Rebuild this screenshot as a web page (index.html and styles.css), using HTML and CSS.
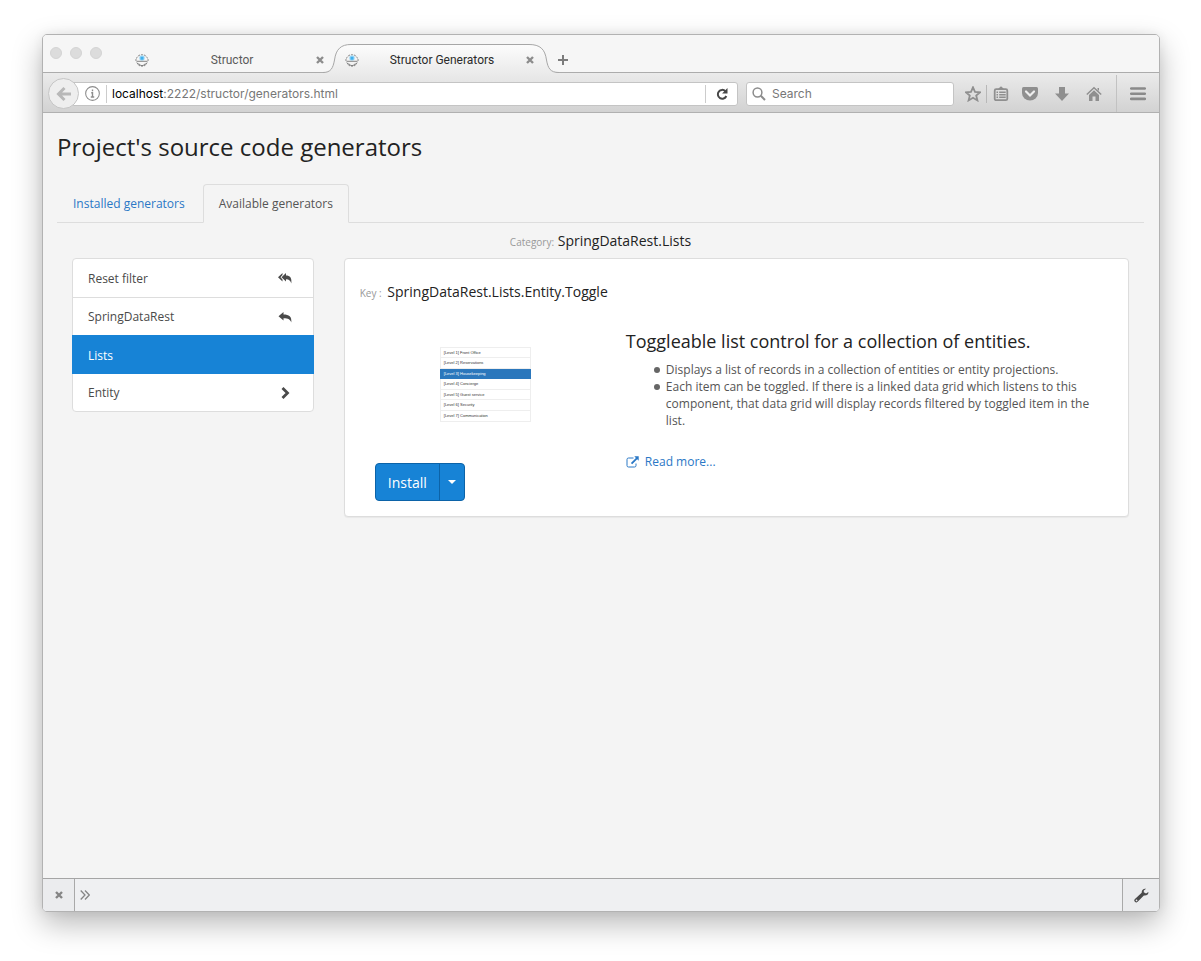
FILE: index.html
```html
<!DOCTYPE html>
<html lang="en">
<head>
<meta charset="utf-8">
<meta name="viewport" content="width=device-width, initial-scale=1">
<title>Structor Generators</title>
<link rel="stylesheet" href="styles.css">
</head>
<body>
<svg class="symbols" aria-hidden="true">
  <symbol id="favicon" viewBox="0 0 14 14">
    <circle cx="7" cy="5" r="2.800" fill="#a9dcf7"/>
    <rect x="5.500" y="3.700" width="3" height="3" fill="#3fb0ee"/>
    <g fill="none" stroke="#777" stroke-width=".9">
      <path d="M1.500 5.500A5.700 5.200 0 0 1 12.500 5.500" stroke-dasharray="2 1"/>
      <path d="M0 7h1.800M12.200 7H14M1.500 8.300h11M1.800 9.500Q3 12 5 13M12.200 9.500Q11 12 9 13"/>
      <path d="M3.500 10.500l3.500 3 3.500-3M6 12.500h2"/>
    </g>
  </symbol>
  <symbol id="close" viewBox="0 0 10 10"><path d="M2 2l6 6M8 2l-6 6" stroke="currentColor" stroke-width="2.400" fill="none"/></symbol>
</svg>

<div class="window">
  <header class="tabstrip">
    <div class="lights"><span></span><span></span><span></span></div>
    <div class="tab">
      <svg class="favicon"><use href="#favicon"/></svg>
      <span class="tab-title">Structor</span>
      <button class="tab-close" aria-label="Close tab"><svg viewBox="0 0 10 10"><use href="#close"/></svg></button>
    </div>
    <div class="tab tab-active">
      <svg class="tab-shape" viewBox="0 0 236 29" preserveAspectRatio="none" aria-hidden="true">
        <defs><linearGradient id="tabfill" x1="0" y1="0" x2="0" y2="1"><stop offset="0" stop-color="#fcfcfc"/><stop offset="1" stop-color="#ebebeb"/></linearGradient></defs>
        <path d="M0 29V28.500C8 28.500 10 24 11.500 16C13 5 18 .5 28 .5H206C217 .5 222 5 223.500 16C225 24 227 28.500 236 28.500V29Z" fill="url(#tabfill)"/>
        <path d="M0 28.500C8 28.500 10 24 11.500 16C13 5 18 .5 28 .5H206C217 .5 222 5 223.500 16C225 24 227 28.500 236 28.500" fill="none" stroke="#a6a6a6"/>
      </svg>
      <svg class="favicon"><use href="#favicon"/></svg>
      <span class="tab-title">Structor Generators</span>
      <button class="tab-close" aria-label="Close tab"><svg viewBox="0 0 10 10"><use href="#close"/></svg></button>
    </div>
    <button class="new-tab" aria-label="New tab"><svg viewBox="0 0 12 12"><path d="M6 1v10M1 6h10" stroke="#7c7c7c" stroke-width="2"/></svg></button>
  </header>

  <div class="toolbar">
    <button class="back" aria-label="Back"><svg viewBox="0 0 16 16"><path d="M8.500 2L2.500 8l6 6M3 8h12" fill="none" stroke="#b8b8b8" stroke-width="3"/></svg></button>
    <div class="urlbar">
      <button class="info" aria-label="Site information"><svg viewBox="0 0 14 14"><circle cx="7" cy="7" r="6.400" fill="none" stroke="#8d8d8d"/><path d="M7 3.200v1.600M5.800 6.300H7v3.900M5.400 10.200h3.200" fill="none" stroke="#8d8d8d" stroke-width="1.300"/></svg></button>
      <div class="url" role="textbox" aria-label="Address" contenteditable="true"><b>localhost</b>:2222/structor/generators.html</div>
      <button class="reload" aria-label="Reload"><svg viewBox="0 0 14 14"><path d="M10.400 4.200A4.400 4.400 0 1 0 11.300 9" fill="none" stroke="#474747" stroke-width="2"/><path d="M12.500 1v5.400H7.100Z" fill="#474747"/></svg></button>
    </div>
    <label class="searchbar">
      <svg viewBox="0 0 14 14"><circle cx="5.500" cy="5.500" r="4.400" fill="none" stroke="#8c8c8c" stroke-width="1.500"/><path d="M8.800 8.800L13 13" stroke="#8c8c8c" stroke-width="2"/></svg>
      <input type="text" placeholder="Search" aria-label="Search">
    </label>
    <div class="actions">
      <button class="star" aria-label="Bookmark"><svg viewBox="0 0 16 16"><path d="M8 1.300l2 4.600 5 .4-3.800 3.200 1.200 4.900L8 11.800l-4.400 2.600 1.200-4.900L1 6.300l5-.4z" fill="none" stroke="#8f8f8f" stroke-width="1.800"/></svg></button>
      <button class="library" aria-label="Bookmarks list"><svg viewBox="0 0 16 16"><path d="M5 3L8 .2 11 3z" fill="#8f8f8f"/><rect x="1.700" y="3.200" width="12.600" height="11" rx="1.500" fill="none" stroke="#8f8f8f" stroke-width="1.800"/><path d="M3.500 6.200h1.500M6.200 6.200h6.500M3.500 8.700h1.500M6.200 8.700h6.500M3.500 11.200h1.500M6.200 11.200h6.500" stroke="#8f8f8f" stroke-width="1.500"/></svg></button>
      <button aria-label="Pocket"><svg viewBox="0 0 16 16"><path d="M1.500 1h13Q16 1 16 2.500V7a8 7.500 0 0 1-16 0V2.500Q0 1 1.500 1z" fill="#8f8f8f"/><path d="M4 5.500l4 4 4-4" fill="none" stroke="#eee" stroke-width="2.200" stroke-linecap="round"/></svg></button>
      <button aria-label="Downloads"><svg viewBox="0 0 16 16"><path d="M5 1h6v6.500h4L8 15 1 7.500h4z" fill="#8f8f8f"/></svg></button>
      <button aria-label="Home"><svg viewBox="0 0 16 16"><path d="M.8 8.500L8 1.700l7.200 6.800" fill="none" stroke="#8f8f8f" stroke-width="1.500"/><path d="M8 4.200l5 4.700V15H9.500v-4.500h-3V15H3V8.900zM11.500 2H13v3l-1.500-1.400z" fill="#8f8f8f"/></svg></button>
      <button class="menu" aria-label="Menu"><svg viewBox="0 0 16 16"><path d="M1.200 2.500h13.600M1.200 7.700h13.600M1.200 12.900h13.600" stroke="#8a8a8a" stroke-width="2.600" stroke-linecap="round"/></svg></button>
    </div>
  </div>

  <main class="page">
    <h1>Project's source code generators</h1>
    <nav class="nav-tabs">
      <a href="#installed">Installed generators</a>
      <a href="#available" class="active">Available generators</a>
    </nav>
    <p class="category"><small>Category:</small> SpringDataRest.Lists</p>
    <div class="columns">
      <aside class="side">
        <div class="list-group">
          <button>Reset filter<svg viewBox="0 0 14 12"><path d="M4.500 1v2L2.500 5.200l2 2.300v2L0 5.200z" fill="#4a4a4a"/><path d="M8 1v2.500c4 0 6 2.300 5.300 8-.7-2.800-2-4.200-5.300-4.300v2.300L3.500 5.200z" fill="#4a4a4a"/></svg></button>
          <button>SpringDataRest<svg viewBox="0 0 14 12"><path d="M5.500 1v2.500c5.500 0 8.500 2 7.800 8-.8-3-3-4.200-7.800-4.300v2.300L.5 5.200z" fill="#4a4a4a"/></svg></button>
          <button class="active">Lists</button>
          <button>Entity<svg viewBox="0 0 14 12"><path d="M4.500 1L9.500 6l-5 5" fill="none" stroke="#4a4a4a" stroke-width="2.800"/></svg></button>
        </div>
      </aside>
      <section class="main">
        <article class="card">
          <p class="key"><small>Key :</small> SpringDataRest.Lists.Entity.Toggle</p>
          <div class="card-row">
            <div class="preview">
              <ul class="thumb">
                <li>[Level 1] Front Office</li>
                <li>[Level 2] Reservations</li>
                <li class="active">[Level 3] Housekeeping</li>
                <li>[Level 4] Concierge</li>
                <li>[Level 5] Guest service</li>
                <li>[Level 6] Security</li>
                <li>[Level 7] Communication</li>
              </ul>
              <div class="btn-group">
                <button class="install">Install</button>
                <button class="caret" aria-label="More install options"><svg viewBox="0 0 8 4"><path d="M0 0h8L4 4z" fill="#fff"/></svg></button>
              </div>
            </div>
            <div class="details">
              <h2>Toggleable list control for a collection of entities.</h2>
              <ul>
                <li>Displays a list of records in a collection of entities or entity projections.</li>
                <li>Each item can be toggled. If there is a linked data grid which listens to this component, that data grid will display records filtered by toggled item in the list.</li>
              </ul>
              <a class="more" href="#more"><svg viewBox="0 0 13 12"><path d="M7.500 2H2.500Q1 2 1 3.500v6Q1 11 2.500 11h6Q10 11 10 9.500V7.500" fill="none" stroke="currentColor" stroke-width="1"/><path d="M8.300.3H12.700v4.400L11.200 3.200 6.200 8.200 4.900 6.900l5-5z" fill="currentColor"/></svg>Read more...</a>
            </div>
          </div>
        </article>
      </section>
    </div>
  </main>

  <footer class="console">
    <button class="console-close" aria-label="Close toolbar"><svg viewBox="0 0 10 10"><use href="#close"/></svg></button>
    <label class="prompt"><svg viewBox="0 0 10 10"><path d="M.7.500L5 5 .7 9.500M5 .5L9.300 5 5 9.500" fill="none" stroke="#858585" stroke-width="1.300"/></svg><input type="text" aria-label="Command"></label>
    <button class="tools" aria-label="Developer tools"><svg viewBox="0 0 16 16"><path d="M15.300 4.200l-2.500 1.700-2.400-1.300.1-2L12.900.9C10.700.2 8 1.600 8.200 5.100L1 11.700a2 2 0 0 0 2.900 3L10.500 8c3 .6 5.300-1.300 4.800-3.800z" fill="#4a4a4a"/><circle cx="2.700" cy="13.200" r=".9" fill="#ebecee"/></svg></button>
  </footer>
</div>
</body>
</html>
```
FILE: styles.css
```css
* { box-sizing: border-box; }

body {
  margin: 0;
  min-height: 100vh;
  padding: 34px 41px 49px 42px;
  display: flex;
  background: #fff;
  font-family: "Open Sans", sans-serif;
  font-size: 12px;
  color: #555;
}

button, input {
  margin: 0;
  padding: 0;
  border: 0;
  background: none;
  font: inherit;
  color: inherit;
}

button { display: flex; align-items: center; }
h1, h2, p, ul { margin: 0; padding: 0; font-weight: 400; }
a { color: #2a78c6; text-decoration: none; }
svg { display: block; flex: none; }
.symbols { position: absolute; width: 0; height: 0; }

.window {
  flex: 1;
  min-width: 0;
  display: flex;
  flex-direction: column;
  overflow: hidden;
  border: 1px solid #b2b2b2;
  border-radius: 5px;
  background: #f4f4f4;
  box-shadow: 0 12px 30px rgba(0, 0, 0, .28), 0 0 12px rgba(0, 0, 0, .06);
}

/* Browser chrome */
.tabstrip, .toolbar { display: flex; }

.tabstrip {
  height: 38px;
  border-bottom: 1px solid #acacac;
  background: #f6f6f6;
  font-family: Roboto, sans-serif;
  font-size: 12px;
  color: #5b5b5b;
}

.lights { display: flex; gap: 8px; width: 82px; padding: 12px 0 0 7px; }
.lights span { width: 12px; height: 12px; border-radius: 50%; background: #dcdcdc; border: 1px solid #d4d4d4; }

.tab {
  position: relative;
  flex: 0 1 210px;
  display: flex;
  align-items: center;
  height: 29px;
  margin-top: 9px;
  padding: 2px 10px 0;
}

.tab-shape { position: absolute; z-index: 0; left: -12px; top: 0; width: 236px; height: 29px; }
.tab-active { color: #2b2b2b; }
.favicon { position: relative; width: 14px; height: 14px; }
.tab-title { position: relative; flex: 1; text-align: center; }
.tab-close { position: relative; color: #8c8c8c; }
.tab-close svg { width: 10px; height: 10px; }
.new-tab { margin: 12px 0 0 12px; }
.new-tab svg { width: 12px; height: 12px; }

.toolbar {
  height: 40px;
  align-items: center;
  padding: 2px 0 0 5px;
  border-bottom: 1px solid #b0b0b0;
  background: linear-gradient(#ebebeb, #d2d2d2);
  font-family: Inter, sans-serif;
}

.back {
  position: relative;
  z-index: 1;
  width: 31px;
  height: 31px;
  margin-right: -8px;
  justify-content: center;
  border: 1px solid #c6c6c6;
  border-radius: 50%;
  background: #eee;
}

.back svg { width: 16px; height: 16px; }

.urlbar, .searchbar {
  display: flex;
  align-items: center;
  height: 24px;
  border: 1px solid #c4c4c4;
  border-radius: 3px;
  background: #fff;
}

.urlbar { flex: 1; min-width: 0; padding-left: 13px; }
.info { padding-right: 6px; border-right: 1px solid #ccc; height: 18px; }
.info svg { width: 15px; height: 15px; }
.url { flex: 1; min-width: 0; padding-left: 5px; color: #777; white-space: nowrap; overflow: hidden; }
.url b { font-weight: 400; color: #000; }
.reload { width: 32px; height: 18px; justify-content: center; border-left: 1px solid #ccc; }
.reload svg { width: 14px; height: 14px; }
.searchbar { flex: 0 1 208px; min-width: 0; margin-left: 8px; padding: 0 5px; gap: 6px; }
.searchbar svg { width: 14px; height: 14px; }
.searchbar input { flex: 1; min-width: 0; outline: none; }
.searchbar input::placeholder { color: #777; opacity: 1; }

.actions { display: flex; align-items: center; align-self: stretch; padding-left: 11px; }
.actions svg { width: 16px; height: 16px; }
.actions button { width: 32px; height: 18px; justify-content: center; }
.actions .star { width: 22px; justify-content: flex-start; border-right: 1px solid #b8b8b8; }
.actions .library { width: 27px; }
.actions .menu { width: 43px; height: 100%; margin-left: 6px; border-left: 1px solid #c2c2c2; }

/* Page */
.page { flex: 1; padding: 16px 15px 16px 14px; }
h1 { color: #222; font-size: 24px; line-height: 36px; }

.nav-tabs {
  display: flex;
  gap: 2px;
  margin-top: 19px;
  border-bottom: 1px solid #ddd;
}

.nav-tabs a {
  padding: 9px 15px;
  margin-bottom: -1px;
  border: 1px solid transparent;
  border-radius: 4px 4px 0 0;
  line-height: 19px;
}

.nav-tabs .active { color: #555; background: #f4f4f4; border-color: #ddd #ddd #f4f4f4; }

small { color: #999; font-size: 10px; }
.category { padding: 8px 0 6px; color: #222; font-size: 14px; line-height: 20px; text-align: center; }

.columns { display: flex; align-items: flex-start; }
.side { flex: 0 0 25%; padding: 0 15px; }
.main { flex: 1; min-width: 0; padding: 0 15px; }

.list-group { border: 1px solid #ddd; border-radius: 4px; background: #fff; color: #4a4a4a; }
.list-group button {
  width: 100%;
  height: 38px;
  padding: 0 21px 0 15px;
  justify-content: space-between;
  border-top: 1px solid #ddd;
}
.list-group button:first-child { border-top: 0; }
.list-group .active { width: calc(100% + 2px); height: 39px; margin: 0 -1px -1px; padding-left: 16px; border-color: #1783d6; background: #1783d6; color: #fff; }
.list-group .active + button { border-top-color: transparent; }
.list-group svg { width: 14px; height: 12px; }

.card { padding: 15px; border: 1px solid #ddd; border-radius: 4px; background: #fff; box-shadow: 0 1px 1px rgba(0, 0, 0, .05); }
.key { color: #222; font-size: 14px; line-height: 36px; }
.key small { margin-right: 2px; }
.card-row { display: flex; }
.preview { flex: 0 0 33.333%; padding: 36px 15px 0; }
.thumb {
  display: grid;
  grid-auto-rows: 1fr;
  width: 91px;
  height: 75px;
  margin: 0 auto 41px;
  list-style: none;
  border: 1px solid #eee;
  font: 4px/9px "Liberation Sans", sans-serif;
  color: #333;
}
.thumb li { padding-left: 3px; border-bottom: 1px solid #eee; }
.thumb li:last-child { border-bottom: 0; }
.thumb .active { background: #2b77bc; border-color: #2b77bc; color: #fff; margin: 0 -1px; padding-left: 4px; }

.btn-group { display: flex; width: fit-content; border: 1px solid #0c63a8; border-radius: 4px; background: #1783d6; color: #fff; }
.btn-group button { height: 36px; }
.install { padding: 0 12px; font-size: 14px; }
.btn-group .caret { padding: 0 8px; border-left: 1px solid #0c63a8; }
.caret svg { width: 8px; height: 4px; }

.details { flex: 1; min-width: 0; padding: 18px 15px 0; }
h2 { color: #222; font-size: 18px; line-height: 24px; }
.details ul { margin: 8px 0 24px; padding-left: 40px; line-height: 17px; list-style: none; }
.details li { position: relative; }
.details li::before { content: ""; position: absolute; left: -12px; top: 6px; width: 6px; height: 6px; border-radius: 50%; background: #666; }
.more { display: flex; align-items: center; gap: 6px; line-height: 17px; }
.more svg { width: 13px; height: 12px; }

/* Developer command line */
.console { display: flex; height: 33px; border-top: 1px solid #a5a5a5; background: #eff0f2; }
.console svg { width: 10px; height: 10px; }
.console button { justify-content: center; background: #ebecee; color: #858585; }
.console-close { width: 32px; border-right: 1px solid #a9a9a9; }
.prompt { flex: 1; display: flex; align-items: center; gap: 6px; padding-left: 5px; }
.prompt input { flex: 1; min-width: 0; outline: none; }
.console .tools { width: 37px; border-left: 1px solid #a9a9a9; }
.console .tools svg { width: 15px; height: 15px; }
```
